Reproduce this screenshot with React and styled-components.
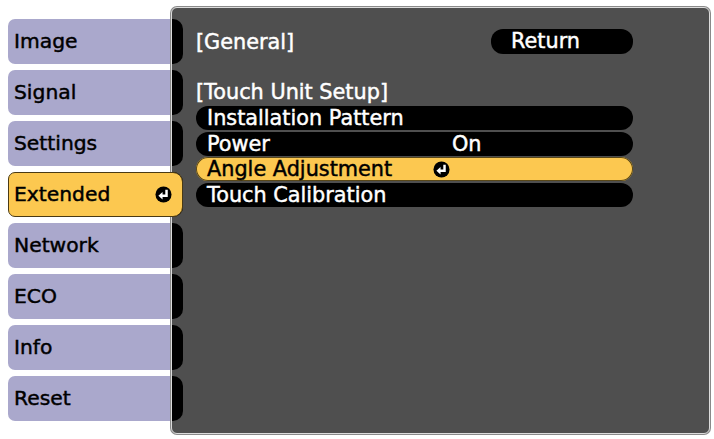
import React from "react";
import styled, { createGlobalStyle } from "styled-components";

const Global = createGlobalStyle`
  html, body {
    margin: 0;
    background: #ffffff;
  }
  body {
    font-family: "DejaVu Sans", "Liberation Sans", sans-serif;
    font-weight: 400;
    font-size: 20.8px;
    -webkit-text-stroke: 0.45px currentColor;
  }
`;

const Screen = styled.div`
  display: flex;
  width: 714px;
  height: 439px;
  padding: 7px 0 0 8px;
  box-sizing: border-box;
`;

const Sidebar = styled.nav`
  display: flex;
  flex-direction: column;
  gap: 6px;
  width: 163px;
  padding-top: 12px;
  flex-shrink: 0;
`;

const Tab = styled.div`
  display: flex;
  align-items: center;
  justify-content: space-between;
  height: 45px;
  box-sizing: border-box;
  padding: 0 10px 1px 6px;
  color: #000;
  font-size: 20.3px;
  background: ${(p) => (p.$active ? "#fcc850" : "#aaa8cc")};
  border-radius: ${(p) => (p.$active ? "7px 10px 10px 7px" : "7px 0 0 7px")};
  ${(p) =>
    p.$active &&
    `
    position: relative;
    z-index: 1;
    margin-right: -12px;
    border: 1px solid #4a3a14;
    padding-left: 5px;
  `}
`;

const Panel = styled.section`
  display: flex;
  width: 539px;
  height: 427px;
  box-sizing: border-box;
  background: #4f4f4f;
  border: 1px solid #dcdcdc;
  box-shadow: 0 0 0 1px #8a8a8a;
  border-radius: 6px;
  overflow: hidden;
`;

const Rail = styled.div`
  display: flex;
  flex-direction: column;
  gap: 6px;
  padding-top: 11px;
  width: 11px;
  flex-shrink: 0;
`;

const Bump = styled.div`
  height: 45px;
  background: #000;
  border-radius: 0 10px 10px 0;
`;

const Content = styled.div`
  display: flex;
  flex-direction: column;
  width: 437px;
  padding: 21px 0 0 13px;
  color: #fff;
`;

const Header = styled.div`
  display: flex;
  align-items: center;
  justify-content: space-between;
  height: 25px;
`;

const Title = styled.div`
  line-height: 22px;
  white-space: nowrap;
`;

const Section = styled(Title)`
  margin-top: 27px;
`;

const ReturnButton = styled.div`
  width: 142px;
  height: 25px;
  box-sizing: border-box;
  padding-left: 20px;
  line-height: 24px;
  background: #000;
  color: #fff;
  border-radius: 12px;
`;

const List = styled.div`
  display: flex;
  flex-direction: column;
  gap: 1.5px;
  margin-top: 3px;
`;

const Row = styled.div`
  display: grid;
  grid-template-columns: 245px 1fr;
  align-items: center;
  height: 24px;
  box-sizing: border-box;
  padding-left: 11px;
  line-height: 22px;
  border-radius: 12px;
  background: ${(p) => (p.$active ? "#fcc850" : "#000")};
  color: ${(p) => (p.$active ? "#000" : "#fff")};
  box-shadow: ${(p) => (p.$active ? "inset 0 0 0 1px #5a4818" : "none")};
  white-space: nowrap;
`;

const Value = styled.div`
  display: flex;
  align-items: center;
  margin-left: ${(p) => (p.$icon ? "-19px" : "0")};
`;

const Enter = ({ size = 17 }) => (
  <svg width={size} height={size} viewBox="0 0 18 18" style={{ display: "block" }}>
    <circle cx="9" cy="9" r="8.5" fill="#000" />
    <path
      d="M12.2 4 V10.4 H7"
      fill="none"
      stroke="#fff"
      strokeWidth="2.6"
      strokeLinejoin="miter"
    />
    <path d="M3.6 10.4 L8 6.4 L8 14.4 Z" fill="#fff" />
  </svg>
);

const tabs = ["Image", "Signal", "Settings", "Extended", "Network", "ECO", "Info", "Reset"];

const rows = [
  { label: "Installation Pattern" },
  { label: "Power", value: "On" },
  { label: "Angle Adjustment", icon: true, active: true },
  { label: "Touch Calibration" },
];

export default function App() {
  return (
    <>
      <Global />
      <Screen>
        <Sidebar>
          {tabs.map((t) => (
            <Tab key={t} $active={t === "Extended"}>
              {t}
              {t === "Extended" && <Enter />}
            </Tab>
          ))}
        </Sidebar>
        <Panel>
          <Rail>
            {tabs.map((t) => (
              <Bump key={t} />
            ))}
          </Rail>
          <Content>
            <Header>
              <Title>[General]</Title>
              <ReturnButton>Return</ReturnButton>
            </Header>
            <Section>[Touch Unit Setup]</Section>
            <List>
              {rows.map((r) => (
                <Row key={r.label} $active={r.active}>
                  <span>{r.label}</span>
                  <Value $icon={r.icon}>{r.icon ? <Enter /> : r.value}</Value>
                </Row>
              ))}
            </List>
          </Content>
        </Panel>
      </Screen>
    </>
  );
}
